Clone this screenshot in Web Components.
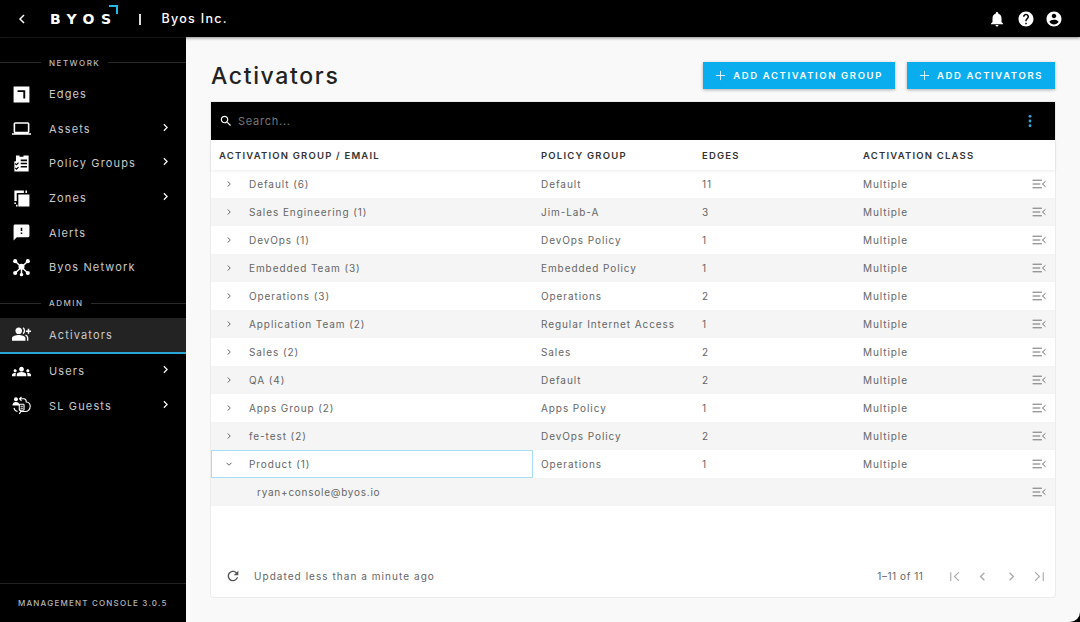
<!DOCTYPE html>
<html>
<head>
<meta charset="utf-8">
<title>Activators</title>
<style>
html, body { margin: 0; height: 100%; background: #000; overflow: hidden; }
body { font-family: "Inter", "Open Sans", sans-serif; }
</style>
</head>
<body>
<byos-app></byos-app>
<script>
// material style icon paths, all on a 24 box
const ICONS = {
    bell: '<path fill="currentColor" d="M12 22c1.1 0 2-.9 2-2h-4c0 1.1.89 2 2 2zm6-6v-5c0-3.07-1.64-5.64-4.5-6.32V4c0-.83-.67-1.5-1.5-1.5s-1.5.67-1.5 1.5v.68C7.63 5.36 6 7.92 6 11v5l-2 2v1h16v-1l-2-2z"/>',
    help: '<path fill="currentColor" d="M12 2C6.48 2 2 6.48 2 12s4.48 10 10 10 10-4.48 10-10S17.52 2 12 2zm1 17h-2v-2h2v2zm2.07-7.75l-.9.92C13.45 12.9 13 13.5 13 15h-2v-.5c0-1.1.45-2.1 1.17-2.83l1.24-1.26c.37-.36.59-.86.59-1.41 0-1.1-.9-2-2-2s-2 .9-2 2H8c0-2.21 1.79-4 4-4s4 1.79 4 4c0 .88-.36 1.68-.93 2.25z"/>',
    account: '<path fill="currentColor" d="M12 2C6.48 2 2 6.48 2 12s4.48 10 10 10 10-4.48 10-10S17.52 2 12 2zm0 3c1.66 0 3 1.34 3 3s-1.34 3-3 3-3-1.34-3-3 1.34-3 3-3zm0 14.2c-2.5 0-4.71-1.28-6-3.22.03-1.99 4-3.08 6-3.08 1.99 0 5.97 1.09 6 3.08-1.29 1.94-3.5 3.22-6 3.22z"/>',
    edges: '<path fill="currentColor" fill-rule="evenodd" d="M2 2h20v20H2zM7 6.5v2.2h7.3V17h2.4V6.5z"/>',
    laptop: '<path fill="currentColor" d="M20 18c1.1 0 1.99-.9 1.99-2L22 6c0-1.1-.9-2-2-2H4c-1.1 0-2 .9-2 2v10c0 1.1.9 2 2 2H0v2h24v-2h-4zM4 6h16v10H4V6z"/>',
    policy: '<path fill="currentColor" fill-rule="evenodd" d="M5 2h4.5v1.6h5V2H21v20H3V9h2zM11 7v2h8V7zM11 11v2h8v-2zM11 15v2h8v-2zM4.6 11.5l1.1 1.1 2.1-2.1 1 1-3.1 3.1-2.1-2.1zM4.6 17l1.1 1.1 2.1-2.1 1 1-3.1 3.1-2.1-2.1z"/>',
    zones: '<path fill="currentColor" d="M8 7h14v15H8zM3 2h12v3H6v10H3zM17 2h2v3h-2zM3 17h2v2H3zM5 20h2v2H5z"/>',
    alert: '<path fill="currentColor" d="M20 2H4c-1.1 0-1.99.9-1.99 2L2 22l4-4h14c1.1 0 2-.9 2-2V4c0-1.1-.9-2-2-2zm-7 12h-2v-2h2v2zm0-4h-2V6h2v4z"/>',
    network: '<g fill="currentColor"><circle cx="12" cy="11" r="3.8"/><circle cx="4" cy="4" r="2.6"/><circle cx="20" cy="4" r="2.6"/><circle cx="4" cy="19" r="2.6"/><circle cx="20" cy="19" r="2.6"/><circle cx="12" cy="21" r="2.2"/></g><path stroke="currentColor" stroke-width="1.8" d="M4 4l16 15M20 4L4 19M12 12v9"/>',
    activators: '<path fill="currentColor" d="M8.500 3c2.500 0 4.200 1.800 4.200 4.200s-1.700 4.300-4.200 4.300-4.200-1.900-4.200-4.300S6 3 8.500 3zM0 20v-3.500C0 14 5.200 12.500 8.500 12.500s8.500 1.500 8.500 4V20z"/><path fill="none" stroke="currentColor" stroke-width="1.700" d="M14 3.500c2.300 1.900 2.300 5.500 0 7.400M17 12.800c1.500.5 2.800 1.700 2.800 3.700V20"/><path stroke="currentColor" stroke-width="1.900" d="M17.500 8h6.500M20.800 4.800v6.400"/>',
    users: '<path fill="currentColor" d="M12 12.750c1.630 0 3.070.390 4.240.900 1.080.480 1.760 1.560 1.760 2.730V18H6v-1.610c0-1.180.680-2.260 1.760-2.730 1.170-.520 2.610-.910 4.240-.910zM4 13c1.100 0 2-.900 2-2s-.900-2-2-2-2 .900-2 2 .900 2 2 2zm1.130 1.100c-.370-.060-.740-.100-1.130-.100-.990 0-1.930.210-2.780.580C.480 14.900 0 15.620 0 16.430V18h4.500v-1.610c0-.830.230-1.610.630-2.290zM20 13c1.100 0 2-.900 2-2s-.900-2-2-2-2 .900-2 2 .900 2 2 2zm4 3.430c0-.810-.480-1.530-1.220-1.850-.850-.370-1.790-.580-2.780-.580-.390 0-.760.040-1.130.100.400.680.630 1.460.630 2.290V18H24v-1.570zM12 6c1.660 0 3 1.340 3 3s-1.340 3-3 3-3-1.340-3-3 1.340-3 3-3z"/>',
    guests: '<g fill="currentColor"><circle cx="5" cy="4" r="2.500"/><path d="M.5 12c0-2.800 2-4.300 4.500-4.300S9.500 9.200 9.500 12z"/></g><rect x="9.200" y="10.500" width="6" height="7.500" rx=".8" fill="none" stroke="currentColor" stroke-width="1.400"/><path stroke="currentColor" stroke-width="1.200" d="M10.800 13h3M10.800 15.500h3"/><path fill="none" stroke="currentColor" stroke-width="1.400" d="M10 3.500h5c2.500 0 3 2 3 4 3.500.300 5 2.700 5 5.500 0 4-3 6.500-6 6.500h-6.500M7 19.500c-2.500-.5-4-1.500-4.500-4.500M12 1l-2.500 2.500L12 6M9 22.500l2.500-3L9 17"/>',
    right: '<path fill="none" stroke="currentColor" stroke-width="2.200" d="M9 6l6 6-6 6"/>',
    left: '<path fill="none" stroke="currentColor" stroke-width="2.200" d="M15 6l-6 6 6 6"/>',
    down: '<path fill="none" stroke="currentColor" stroke-width="2.200" d="M6 9l6 6 6-6"/>',
    first: '<path fill="none" stroke="currentColor" stroke-width="1.800" d="M6 5v14M19 5l-7 7 7 7"/>',
    last: '<path fill="none" stroke="currentColor" stroke-width="1.800" d="M18 5v14M5 5l7 7-7 7"/>',
    plus: '<path fill="none" stroke="currentColor" stroke-width="1.800" d="M12 2v20M2 12h20"/>',
    search: '<path fill="currentColor" d="M15.500 14h-.790l-.280-.270C15.410 12.590 16 11.110 16 9.500 16 5.910 13.090 3 9.500 3S3 5.910 3 9.500 5.910 16 9.500 16c1.610 0 3.090-.590 4.230-1.570l.270.280v.790l5 4.990L20.490 19l-4.990-5zm-6 0C7.010 14 5 11.990 5 9.500S7.010 5 9.500 5 14 7.010 14 9.500 11.990 14 9.500 14z"/>',
    more: '<g fill="currentColor"><circle cx="12" cy="5" r="2.100"/><circle cx="12" cy="12" r="2.100"/><circle cx="12" cy="19" r="2.100"/></g>',
    refresh: '<path fill="currentColor" d="M17.650 6.350C16.200 4.900 14.210 4 12 4c-4.420 0-7.990 3.580-7.990 8s3.570 8 7.990 8c3.730 0 6.840-2.550 7.730-6h-2.080c-.820 2.330-3.040 4-5.650 4-3.310 0-6-2.690-6-6s2.690-6 6-6c1.660 0 3.140.690 4.220 1.780L13 11h7V4l-2.350 2.350z"/>',
    rowmenu: '<path fill="none" stroke="currentColor" stroke-width="1.600" d="M1 5.500h16M1 12h13M1 18.500h16M23 7.500l-5 4.500 5 4.500"/>'
};

function icon (name, size) {
    return `<svg viewBox="0 0 24 24" width="${size}" height="${size}" aria-hidden="true">${ICONS[name]}</svg>`;
}

class ByosIcon extends HTMLElement {
    connectedCallback () {
        const size = this.getAttribute("size") || 24;
        const shadow = this.shadowRoot || this.attachShadow({ mode: "open" });
        shadow.innerHTML = `<style>:host { display: inline-flex; flex: none; } svg { display: block; }</style>${icon(this.getAttribute("name"), size)}`;
    }
}

class ByosTopbar extends HTMLElement {
    constructor () {
        super();
        this.attachShadow({ mode: "open" }).innerHTML = `
        <style>
        :host { display: flex; align-items: center; height: 37px; background: #000; color: #fff; padding: 0 17px 0 14px; flex: none; position: relative; z-index: 2; box-shadow: 0 1px 3px rgba(0,0,0,.45); }
        .back { margin-right: 21px; }
        .logo { display: flex; align-items: flex-start; width: 69px; height: 18px; margin-left: -1px; margin-right: 1px; }
        .logo b { font: 700 14px "DejaVu Sans", sans-serif; letter-spacing: 6.5px; line-height: 14px; margin: 2px -12px 0 0; white-space: nowrap; }
        .corner { width: 7px; height: 7px; border: solid #29b6e8; border-width: 2px 2px 0 0; margin: -5px 1px 0 auto; flex: none; }
        .sep { width: 1.5px; height: 11px; background: #ddd; margin: 2px 21px 0 19px; }
        .org { font-size: 12.5px; font-weight: 500; letter-spacing: 1.3px; }
        .right { margin-left: auto; display: flex; gap: 10.500px; }
        </style>
        <byos-icon class="back" name="left" size="16"></byos-icon>
        <span class="logo"><b>BYOS</b><i class="corner"></i></span>
        <i class="sep"></i>
        <span class="org"><slot></slot></span>
        <span class="right">
            <byos-icon name="bell" size="18"></byos-icon>
            <byos-icon name="help" size="18"></byos-icon>
            <byos-icon name="account" size="18"></byos-icon>
        </span>`;
    }
}

class NavLabel extends HTMLElement {
    constructor () {
        super();
        this.attachShadow({ mode: "open" }).innerHTML = `
        <style>
        :host { display: flex; align-items: center; gap: 8px; height: 13px; font-size: 8px; font-weight: 500; letter-spacing: 1.500px; color: #bbb; flex: none; }
        i { height: 1px; background: #2a2a2a; flex: 1; }
        i:first-of-type { flex: 0 0 41px; }
        </style>
        <i></i><slot></slot><i></i>`;
    }
}

class NavItem extends HTMLElement {
    constructor () {
        super();
        const more = this.hasAttribute("more");
        const name = this.getAttribute("icon");
        this.attachShadow({ mode: "open" }).innerHTML = `
        <style>
        :host { display: flex; align-items: center; height: 34.600px; padding-left: 12px; color: #fff; flex: none; }
        :host([active]) { height: 34.500px; background: #232323; border-bottom: 2px solid #29a8d8; }
        .label { margin-left: 18px; font-size: 11px; letter-spacing: 1.150px; color: #c9c9c9; flex: 1; }
        .more { margin-right: 14px; margin-top: -3px; }
        </style>
        <byos-icon name="${name}" size="19"></byos-icon>
        <span class="label"><slot></slot></span>
        ${more ? '<byos-icon class="more" name="right" size="13"></byos-icon>' : ""}`;
    }
}

class ByosSidebar extends HTMLElement {
    constructor () {
        super();
        this.attachShadow({ mode: "open" }).innerHTML = `
        <style>
        :host { display: flex; flex-direction: column; width: 186px; flex: none; background: #000; border-top: 1px solid #1f1f1f; box-sizing: border-box; }
        .network { margin-top: 18px; margin-bottom: 8px; }
        .admin { margin-top: 12px; margin-bottom: 8px; }
        .foot { margin-top: auto; border-top: 1px solid #222; height: 39px; box-sizing: border-box; display: flex; align-items: center; padding: 0 0 0 18px; font-size: 8px; font-weight: 500; letter-spacing: 1.200px; color: #b5b5b5; white-space: nowrap; }
        </style>
        <nav-label class="network">NETWORK</nav-label>
        <nav-item icon="edges">Edges</nav-item>
        <nav-item icon="laptop" more>Assets</nav-item>
        <nav-item icon="policy" more>Policy Groups</nav-item>
        <nav-item icon="zones" more>Zones</nav-item>
        <nav-item icon="alert">Alerts</nav-item>
        <nav-item icon="network">Byos Network</nav-item>
        <nav-label class="admin">ADMIN</nav-label>
        <nav-item icon="activators" active>Activators</nav-item>
        <nav-item icon="users" more>Users</nav-item>
        <nav-item icon="guests" more>SL Guests</nav-item>
        <div class="foot">MANAGEMENT CONSOLE 3.0.5</div>`;
    }
}

class AddButton extends HTMLElement {
    constructor () {
        super();
        this.attachShadow({ mode: "open" }).innerHTML = `
        <style>
        :host { display: inline-flex; align-items: center; gap: 7px; height: 27px; padding: 0 12px; background: #0aaeee; color: #fff; font-size: 9.500px; font-weight: 600; letter-spacing: 1.620px; box-shadow: 0 1px 3px rgba(0,0,0,.3); white-space: nowrap; }
        </style>
        <byos-icon name="plus" size="11"></byos-icon><slot></slot>`;
    }
}

class ActivatorRow extends HTMLElement {
    constructor () {
        super();
        const a = n => this.getAttribute(n) || "";
        const child = this.hasAttribute("child");
        const open = this.hasAttribute("open");
        this.attachShadow({ mode: "open" }).innerHTML = `
        <style>
        :host { display: grid; grid-template-columns: 322px 161px 161px 1fr; height: 28px; background: #fff; font-size: 10px; letter-spacing: .92px; color: #666; align-items: center; white-space: nowrap; }
        :host(:nth-of-type(even)) { background: #f5f5f5; }
        :host([child]) { background: #f5f5f5; letter-spacing: .75px; }
        .first { display: flex; align-items: center; height: 100%; padding-left: 13px; box-sizing: border-box; }
        .first byos-icon { color: #555; margin-right: 15px; }
        :host([open]) .first { box-shadow: inset 0 0 0 1px #a5def5; background: #fff; }
        .first.child { padding-left: 46px; }
        .policy { padding-left: 8px; }
        .edges { padding-left: 8px; }
        .cls { padding-left: 8px; display: flex; align-items: center; justify-content: space-between; padding-right: 9px; }
        .cls byos-icon { color: #666; }
        </style>
        <div class="first ${child ? "child" : ""}">
            ${child ? "" : `<byos-icon name="${open ? "down" : "right"}" size="10"></byos-icon>`}
            <slot></slot>
        </div>
        <div class="policy">${a("policy")}</div>
        <div class="edges">${a("edges")}</div>
        <div class="cls"><span>${a("cls")}</span><byos-icon name="rowmenu" size="14"></byos-icon></div>`;
    }
}

class ActivatorsTable extends HTMLElement {
    constructor () {
        super();
        this.attachShadow({ mode: "open" }).innerHTML = `
        <style>
        :host { display: flex; flex-direction: column; flex: 1; background: #fff; border-radius: 0 0 3px 3px; box-shadow: 0 0 0 1px #ececec; min-height: 0; }
        .toolbar { display: flex; align-items: center; height: 38px; background: #000; padding: 0 17px 0 8px; color: #fff; flex: none; }
        .search { margin-left: 5px; font-size: 11px; letter-spacing: .75px; color: #777; }
        .toolbar .dots { margin-left: auto; color: #2fa9dc; }
        .head { display: grid; grid-template-columns: 322px 161px 161px 1fr; height: 30px; align-items: center; font-size: 9.500px; font-weight: 600; letter-spacing: 1.200px; color: #333; flex: none; box-shadow: 0 1px 3px rgba(0,0,0,.08); position: relative; }
        .head span { padding-left: 8px; white-space: nowrap; }
        .rows { flex: none; }
        .foot { margin-top: auto; height: 42px; display: flex; align-items: center; padding: 0 8px 0 14px; color: #666; font-size: 10px; letter-spacing: 1.050px; flex: none; }
        .foot .updated { margin-left: 13px; }
        .foot .range { margin-left: auto; margin-right: 23px; letter-spacing: .55px; }
        .pager { display: flex; gap: 13.500px; color: #aaa; }
        .refresh { color: #555; }
        </style>
        <div class="toolbar">
            <byos-icon name="search" size="14"></byos-icon>
            <span class="search">Search...</span>
            <byos-icon class="dots" name="more" size="16"></byos-icon>
        </div>
        <div class="head">
            <span>ACTIVATION GROUP / EMAIL</span><span>POLICY GROUP</span><span>EDGES</span><span>ACTIVATION CLASS</span>
        </div>
        <div class="rows"><slot></slot></div>
        <div class="foot">
            <byos-icon class="refresh" name="refresh" size="16"></byos-icon>
            <span class="updated">Updated less than a minute ago</span>
            <span class="range">1–11 of 11</span>
            <span class="pager">
                <byos-icon name="first" size="15"></byos-icon>
                <byos-icon name="left" size="15"></byos-icon>
                <byos-icon name="right" size="15"></byos-icon>
                <byos-icon name="last" size="15"></byos-icon>
            </span>
        </div>`;
    }
}

class ByosApp extends HTMLElement {
    constructor () {
        super();
        const rows = [
            ["Default (6)", "Default", "11"],
            ["Sales Engineering (1)", "Jim-Lab-A", "3"],
            ["DevOps (1)", "DevOps Policy", "1"],
            ["Embedded Team (3)", "Embedded Policy", "1"],
            ["Operations (3)", "Operations", "2"],
            ["Application Team (2)", "Regular Internet Access", "1"],
            ["Sales (2)", "Sales", "2"],
            ["QA (4)", "Default", "2"],
            ["Apps Group (2)", "Apps Policy", "1"],
            ["fe-test (2)", "DevOps Policy", "2"],
            ["Product (1)", "Operations", "1"]
        ];
        const rowHtml = rows.map(([name, policy, edges], i) =>
            `<activator-row policy="${policy}" edges="${edges}" cls="Multiple" ${i === 10 ? "open" : ""}>${name}</activator-row>`
        ).join("");
        this.attachShadow({ mode: "open" }).innerHTML = `
        <style>
        :host { display: flex; flex-direction: column; height: 622px; width: 1080px; background: #000; }
        .body { display: flex; flex: 1; min-height: 0; }
        main { flex: 1; background: #f9f9f9; border-bottom-right-radius: 10px; padding: 25px; display: flex; flex-direction: column; min-width: 0; }
        .title { display: flex; align-items: center; height: 27px; margin-bottom: 13px; flex: none; }
        h1 { margin: 0; font-size: 23px; font-weight: 500; letter-spacing: 1.650px; color: #222; }
        .actions { margin-left: auto; display: flex; gap: 12px; }
        </style>
        <byos-topbar>Byos Inc.</byos-topbar>
        <div class="body">
            <byos-sidebar></byos-sidebar>
            <main>
                <div class="title">
                    <h1>Activators</h1>
                    <div class="actions">
                        <add-button>ADD ACTIVATION GROUP</add-button>
                        <add-button>ADD ACTIVATORS</add-button>
                    </div>
                </div>
                <activators-table>
                    ${rowHtml}
                    <activator-row child>ryan+console@byos.io</activator-row>
                </activators-table>
            </main>
        </div>`;
    }
}

customElements.define("byos-icon", ByosIcon);
customElements.define("byos-topbar", ByosTopbar);
customElements.define("nav-label", NavLabel);
customElements.define("nav-item", NavItem);
customElements.define("byos-sidebar", ByosSidebar);
customElements.define("add-button", AddButton);
customElements.define("activator-row", ActivatorRow);
customElements.define("activators-table", ActivatorsTable);
customElements.define("byos-app", ByosApp);
</script>
</body>
</html>
